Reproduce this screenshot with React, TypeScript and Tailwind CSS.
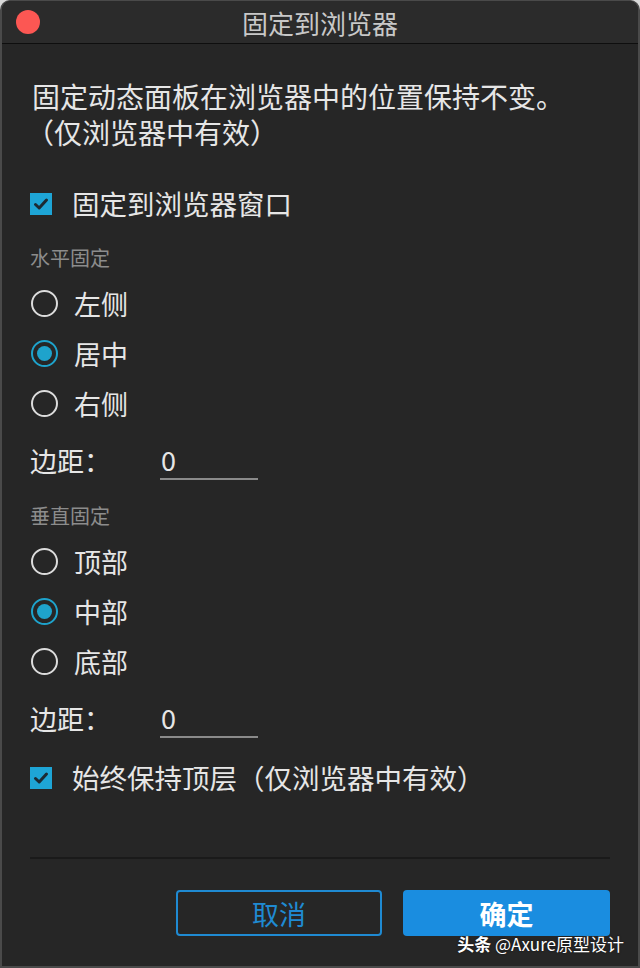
import React from "react";

const FONT = { fontFamily: '"Noto Sans CJK SC", "Noto Sans", sans-serif' };

function Check({ label }: { label: string }) {
  return (
    <div className="flex items-center h-[50px]">
      <div className="w-[22px] h-[22px] bg-[#1ea5d6] flex items-center justify-center">
        <svg width="16" height="16" viewBox="0 0 16 16">
          <path d="M2.5 8.5 L6.2 12 L13.5 4" fill="none" stroke="#1c2a33" strokeWidth="3" strokeLinecap="round" strokeLinejoin="round" />
        </svg>
      </div>
      <span className="ml-[20px] text-[27.5px] leading-none text-[#e6e6e6]">{label}</span>
    </div>
  );
}

function Radio({ label, checked }: { label: string; checked?: boolean }) {
  return (
    <div className="flex items-center h-[50px]">
      <div
        className={
          checked
            ? "w-[27px] h-[27px] rounded-full border-2 border-[#1ea3cc] flex items-center justify-center"
            : "w-[27px] h-[27px] rounded-full border-2 border-[#dcdcdc]"
        }
      >
        {checked && <div className="w-[15px] h-[15px] rounded-full bg-[#1ea3cc]" />}
      </div>
      <span className="ml-[16px] text-[27px] leading-none text-[#e6e6e6]">{label}</span>
    </div>
  );
}

function Margin() {
  return (
    <div className="flex items-center h-[40px]">
      <span className="w-[130px] text-[27px] leading-none text-[#e6e6e6]">边距：</span>
      <div className="w-[98px] h-[40px] border-b-2 border-[#8a8a8a] flex items-center">
        <span className="pl-[1px] text-[27px] leading-none text-[#e6e6e6]">0</span>
      </div>
    </div>
  );
}

function Section({ label }: { label: string }) {
  return <div className="h-[28px] flex items-center text-[20px] leading-none text-[#8c8c8c]">{label}</div>;
}

export default function App() {
  return (
    <div className="w-[640px] h-[968px] bg-[#d9d9d9]" style={FONT}>
      <div className="w-[640px] h-[968px] rounded-t-[10px] bg-[#262626] border-x-2 border-b-2 border-t border-[#4a4a4a] flex flex-col overflow-hidden relative">
        <div className="h-[43px] bg-[#2b2b2b] flex items-center relative border-b border-[#0e0e0e] shrink-0">
          <div className="absolute left-[14px] top-[9px] w-[24px] h-[24px] rounded-full bg-[#fc5753]" />
          <div className="flex-1 text-center text-[26px] leading-none text-[#c8c8c8] pt-[2px]">固定到浏览器</div>
        </div>
        <div className="flex flex-col pl-[28px] pr-[28px]">
          <div className="mt-[34px] text-[28px] leading-[36px] text-[#e6e6e6] pl-[2px]">
            <div>固定动态面板在浏览器中的位置保持不变。</div>
            <div className="-ml-[6px]">（仅浏览器中有效）</div>
          </div>
          <div className="mt-[29px]">
            <Check label="固定到浏览器窗口" />
          </div>
          <div className="mt-[15px]">
            <Section label="水平固定" />
          </div>
          <div className="mt-[6px] pl-[1px]">
            <Radio label="左侧" />
            <Radio label="居中" checked />
            <Radio label="右侧" />
          </div>
          <div className="mt-[12px]">
            <Margin />
          </div>
          <div className="mt-[22px]">
            <Section label="垂直固定" />
          </div>
          <div className="mt-[6px] pl-[1px]">
            <Radio label="顶部" />
            <Radio label="中部" checked />
            <Radio label="底部" />
          </div>
          <div className="mt-[12px]">
            <Margin />
          </div>
          <div className="mt-[15px]">
            <Check label="始终保持顶层（仅浏览器中有效）" />
          </div>
          <div className="mt-[54px] h-[2px] bg-[#1a1a1a]" />
          <div className="mt-[31px] flex justify-end gap-[21px]">
            <button className="w-[206px] h-[46px] rounded-[4px] border-2 border-[#1f8ad2] text-[27px] leading-none text-[#1f8ad2] bg-transparent">取消</button>
            <button className="w-[207px] h-[46px] rounded-[4px] bg-[#1a8de0] text-[27px] leading-none text-white font-bold">确定</button>
          </div>
        </div>
        <div className="absolute right-[14px] bottom-[14px] text-[17px] leading-none text-white" style={{ textShadow: "0 0 2px rgba(0,0,0,0.6)" }}>
          <span className="font-bold">头条</span> @Axure原型设计
        </div>
      </div>
    </div>
  );
}
